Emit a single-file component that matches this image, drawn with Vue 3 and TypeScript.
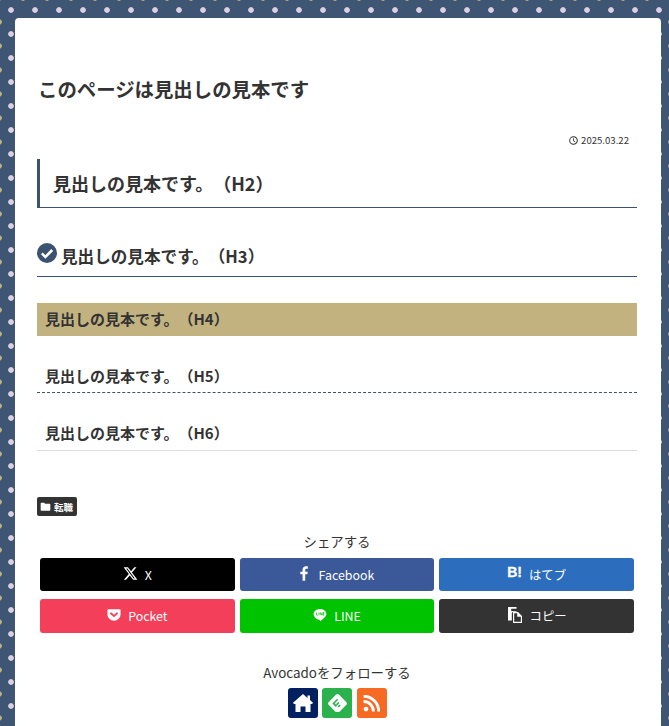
<script setup lang="ts">
const headingText = '見出しの見本です。'

interface ShareButton {
  name: string
  label: string
}

const shareButtons: ShareButton[] = [
  { name: 'x', label: 'X' },
  { name: 'facebook', label: 'Facebook' },
  { name: 'hatena', label: 'はてブ' },
  { name: 'pocket', label: 'Pocket' },
  { name: 'line', label: 'LINE' },
  { name: 'copy', label: 'コピー' },
]
</script>

<template>
  <div class="page">
    <main class="card">
      <h1 class="title">このページは見出しの見本です</h1>

      <div class="date">
        <svg class="clock" viewBox="0 0 16 16" width="9" height="9">
          <circle cx="8" cy="8" r="6.8" fill="none" stroke="#333" stroke-width="1.8" />
          <path d="M8 4v4.6l3 1.6" fill="none" stroke="#333" stroke-width="1.6" />
        </svg>
        <span>2025.03.22</span>
      </div>

      <h2 class="h2">{{ headingText }}（H2）</h2>

      <h3 class="h3">
        <svg class="check" viewBox="0 0 20 20" width="20" height="20">
          <circle cx="10" cy="10" r="10" fill="#3b5370" />
          <path d="M4.8 10.4l3.6 3.6 6.8-7" fill="none" stroke="#fff" stroke-width="2.6" />
        </svg>
        <span>{{ headingText }}（H3）</span>
      </h3>

      <h4 class="h4">{{ headingText }}（H4）</h4>
      <h5 class="h5">{{ headingText }}（H5）</h5>
      <h6 class="h6">{{ headingText }}（H6）</h6>

      <div class="tag">
        <svg viewBox="0 0 16 16" width="11" height="11">
          <path d="M1 3.500c0-.6.4-1 1-1h4l1.500 1.500H14c.6 0 1 .4 1 1V13c0 .6-.4 1-1 1H2c-.6 0-1-.4-1-1z" fill="#fff" />
        </svg>
        <span>転職</span>
      </div>

      <div class="share-title">シェアする</div>
      <div class="share-grid">
        <a v-for="btn in shareButtons" :key="btn.name" class="share-btn" :class="btn.name">
          <svg v-if="btn.name === 'x'" class="ico" viewBox="0 0 24 24" width="15" height="15">
            <path fill="#fff" d="M18.2 2h3.4l-7.4 8.5L23 22h-6.800l-5.300-7-6.100 7H1.400l7.900-9.100L1 2h7l4.800 6.400zm-1.200 18h1.900L7 3.900H5z" />
          </svg>
          <svg v-else-if="btn.name === 'facebook'" class="ico" viewBox="0 0 10 18" width="8" height="15">
            <path fill="#fff" d="M6.500 18V10h2.700l.5-3.200H6.500v-2c0-.9.3-1.600 1.600-1.600h1.700V.3C9.400.2 8.500 0 7.400 0 5 0 3.200 1.500 3.200 4.300v2.500H.4V10h2.800v8z" />
          </svg>
          <span v-else-if="btn.name === 'hatena'" class="hb">B!</span>
          <svg v-else-if="btn.name === 'pocket'" class="ico" viewBox="0 0 16 16" width="14" height="14">
            <path fill="#fff" d="M1.500 1.500h13c.6 0 1 .4 1 1V7a7.500 7.500 0 0 1-15 0V2.500c0-.6.4-1 1-1z" />
            <path d="M4.500 6l3.500 3.300L11.500 6" fill="none" stroke="#f43f5a" stroke-width="2" stroke-linecap="round" />
          </svg>
          <svg v-else-if="btn.name === 'line'" class="ico" viewBox="0 0 16 16" width="14" height="14">
            <path fill="#fff" d="M8 1c4 0 7.300 2.500 7.300 5.700 0 3-3.500 6-7 8.300-.5.300-.5-.3-.4-1.300C4 13.500.7 10.500.7 6.700.7 3.500 4 1 8 1z" />
            <path d="M4 5.200v3h1.500M6.800 5.200v3M8.300 8.200v-3l2 3v-3M13 5.200h-1.600v3H13M11.400 6.700H13" fill="none" stroke="#00c300" stroke-width=".8" />
          </svg>
          <svg v-else class="ico" viewBox="0 0 16 16" width="16" height="16">
            <path fill="#fff" d="M1 0h8.500v1.800H4.200V4H9.500v.8H6L4.800 6v7.500H1z" />
            <path fill="#fff" d="M6 5h5l4 4v7H6z" />
            <path fill="#333" d="M7.200 6.200h3v3.600h3.600v5H7.200z" />
          </svg>
          <span class="btn-label">{{ btn.label }}</span>
        </a>
      </div>

      <div class="follow-title">Avocadoをフォローする</div>
      <div class="follow">
        <a class="follow-btn home">
          <svg viewBox="0 0 20 18" width="20" height="18">
            <path fill="#fff" d="M10 0l4.500 3.900V1.500h2.500v4.600l3 2.600-.9 1.300H17.500V18h-5v-5.500h-5V18h-5v-8H.9L0 8.700z" />
          </svg>
        </a>
        <a class="follow-btn feedly">
          <svg viewBox="0 0 20 20" width="21" height="21">
            <path fill="#fff" d="M8.700 1.500c.7-.7 1.900-.7 2.600 0l7.200 7.200c.7.700.7 1.900 0 2.600l-6.300 6.300c-.4.400-.9.500-1.300.5H9.100c-.5 0-1-.1-1.300-.5L1.500 11.300c-.7-.7-.7-1.900 0-2.600z" />
            <path d="M10 6L6.200 9.900 9 12.700M11.300 9l-2.300 2.300M12.500 11.400l-1.800 1.800" fill="none" stroke="#2bb24c" stroke-width="1.500" />
          </svg>
        </a>
        <a class="follow-btn rss">
          <svg viewBox="0 0 20 20" width="17" height="17">
            <circle cx="3.500" cy="16.500" r="2.800" fill="#fff" />
            <path d="M.7 7.700a11.600 11.600 0 0 1 11.600 11.600" fill="none" stroke="#fff" stroke-width="3.400" />
            <path d="M.7 1.500a17.800 17.800 0 0 1 17.800 17.800" fill="none" stroke="#fff" stroke-width="3.400" />
          </svg>
        </a>
      </div>
    </main>
  </div>
</template>

<style>
html,
body {
  margin: 0;
  overflow: hidden;
}
</style>

<style scoped>
.page {
  height: 726px;
  overflow: hidden;
  padding: 18px 8px 0 15px;
  box-sizing: border-box;
  background-color: #3e5674;
  background-image:
    radial-gradient(circle at 12px 12px, #dccfe0 2.4px, transparent 3.2px),
    radial-gradient(circle at 12px 12px, #c2b280 2.4px, transparent 3.2px);
  background-size: 24px 24px;
  background-position: -1px -2px, -13px 10px;
  font-family: "Noto Sans CJK JP", "Noto Sans", sans-serif;
  color: #333;
  text-spacing-trim: space-all;
}

.card {
  background: #fff;
  border-radius: 4px;
  height: 760px;
  padding: 0 24px 0 22px;
}

.title {
  margin: 0;
  padding: 56px 0 0 1px;
  font-size: 19.4px;
  line-height: 30px;
  font-weight: 700;
}

.date {
  display: flex;
  align-items: center;
  justify-content: flex-end;
  gap: 3px;
  margin-top: 29px;
  padding-right: 8px;
  font-size: 9.6px;
  line-height: 15px;
}

.h2 {
  margin: 11px 0 0;
  height: 49px;
  box-sizing: border-box;
  padding: 9px 0 0 13px;
  border-left: 3px solid #3b5370;
  border-bottom: 1px solid #3b5370;
  font-size: 18px;
  line-height: 30px;
}

.h3 {
  display: flex;
  align-items: flex-start;
  gap: 4px;
  margin: 35px 0 0;
  height: 33px;
  border-bottom: 1px solid #3b5370;
  font-size: 16.6px;
  line-height: 26px;
}

.check {
  flex: none;
}

.h4 {
  margin: 26px 0 0;
  height: 33px;
  padding-left: 8px;
  background: #c2b280;
  font-size: 15px;
  line-height: 32px;
}

.h5 {
  margin: 23px 0 0;
  height: 33px;
  padding-left: 8px;
  border-bottom: 1px dashed #3b5370;
  font-size: 15px;
  line-height: 33px;
}

.h6 {
  margin: 24px 0 0;
  height: 33px;
  padding-left: 8px;
  border-bottom: 1px solid #ddd;
  font-size: 15px;
  line-height: 32px;
}

.tag {
  display: flex;
  align-items: center;
  gap: 3px;
  width: 40px;
  height: 19px;
  box-sizing: border-box;
  margin-top: 46px;
  padding-left: 3px;
  background: #333;
  border-radius: 2px;
  color: #fff;
  font-size: 9.500px;
  font-weight: 700;
}

.share-title,
.follow-title {
  text-align: center;
  font-size: 13.4px;
  line-height: 20px;
}

.share-title {
  margin-top: 15px;
}

.share-grid {
  display: grid;
  grid-template-columns: repeat(3, 1fr);
  gap: 8px 5px;
  margin: 7px 3px 0;
}

.share-btn {
  display: flex;
  align-items: center;
  justify-content: center;
  gap: 7px;
  height: 33px;
  border-radius: 3px;
  color: #fff;
  font-size: 12.400px;
}

.share-btn:nth-child(n + 4) {
  height: 34px;
}

.x { background: #000; }
.facebook { background: #3b5998; gap: 11px; }
.hatena { background: #2c6ebd; }
.pocket { background: #f43f5a; }
.line { background: #00c300; }
.copy { background: #333; }

.hb {
  font-family: "Liberation Sans", sans-serif;
  font-size: 14px;
  font-weight: 700;
  line-height: 14px;
  margin-top: -5px;
  -webkit-text-stroke: 0.3px #fff;
}

.ico {
  margin-top: -3px;
}

.follow-title {
  margin-top: 29px;
}

.follow {
  display: flex;
  justify-content: center;
  gap: 4.500px;
  margin-top: 6px;
}

.follow-btn {
  display: flex;
  align-items: center;
  justify-content: center;
  width: 30px;
  height: 30px;
  border-radius: 3px;
}

.home { background: #002060; }
.feedly { background: #2bb24c; }
.rss { background: #f76a24; }
</style>
